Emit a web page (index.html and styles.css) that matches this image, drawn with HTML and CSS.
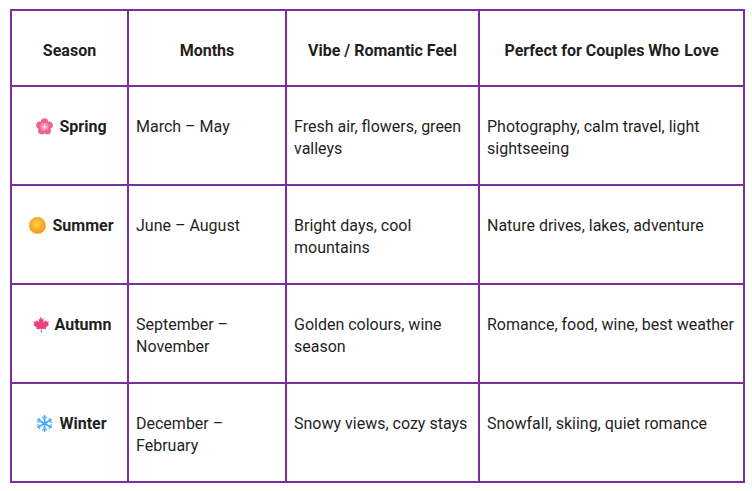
FILE: index.html
```html
<!DOCTYPE html>
<html lang="en">
<head>
<meta charset="utf-8">
<title>Seasons</title>
<link rel="stylesheet" href="styles.css">
</head>
<body>
<table class="seasons">
  <colgroup>
    <col class="c1"><col class="c2"><col class="c3"><col class="c4">
  </colgroup>
  <thead>
    <tr>
      <th>Season</th>
      <th>Months</th>
      <th>Vibe / Romantic Feel</th>
      <th>Perfect for Couples Who Love</th>
    </tr>
  </thead>
  <tbody>
    <tr>
      <td class="season"><span class="emo"><svg viewBox="0 0 16 16" width="17" height="17"><g fill="#f06292"><circle cx="8" cy="3.6" r="3.4"/><circle cx="12.4" cy="6.8" r="3.4"/><circle cx="10.7" cy="12" r="3.4"/><circle cx="5.3" cy="12" r="3.4"/><circle cx="3.6" cy="6.8" r="3.4"/></g><circle cx="8" cy="8.3" r="3.8" fill="#f48fb1"/><path d="M8 6.2v4.2M5.9 8.3h4.2" stroke="#fbe3ee" stroke-width="1.1"/></svg></span> Spring</td>
      <td>March – May</td>
      <td>Fresh air, flowers, green valleys</td>
      <td>Photography, calm travel, light sightseeing</td>
    </tr>
    <tr>
      <td class="season"><span class="emo"><svg viewBox="0 0 16 16" width="17" height="17"><defs><radialGradient id="sg" cx="0.45" cy="0.4" r="0.6"><stop offset="0" stop-color="#ffd54f"/><stop offset="1" stop-color="#f59a1b"/></radialGradient></defs><circle cx="8" cy="8" r="7.8" fill="#f7a128" stroke="#ef8f1a" stroke-width="0.6" stroke-dasharray="1.2 0.9"/><circle cx="8" cy="8" r="6.6" fill="url(#sg)"/></svg></span> Summer</td>
      <td>June – August</td>
      <td>Bright days, cool mountains</td>
      <td>Nature drives, lakes, adventure</td>
    </tr>
    <tr>
      <td class="season"><span class="emo"><svg viewBox="0 0 16 16" width="17" height="17"><path fill="#ec407a" d="M8 0.3l1.7 3 1.4-0.8-0.4 3.6 2.5-2.1 0.6 1.5 2.2-0.3-0.9 2.4 1.2 0.7-3.6 2.8 0.5 1.4-4.1-0.5v3.9h-0.8v-3.9l-4.1 0.5 0.5-1.4-3.6-2.8 1.2-0.7-0.9-2.4 2.2 0.3 0.6-1.5 2.5 2.1-0.4-3.6 1.4 0.8z"/></svg></span> Autumn</td>
      <td>September – November</td>
      <td>Golden colours, wine season</td>
      <td>Romance, food, wine, best weather</td>
    </tr>
    <tr>
      <td class="season"><span class="emo"><svg viewBox="0 0 16 16" width="17" height="17"><g stroke="#42a5f5" stroke-width="1.6" stroke-linecap="round" fill="none"><path d="M8 0.8v14.4M1.8 4.4l12.4 7.2M1.8 11.6l12.4-7.2"/><path d="M6 1.8l2 2 2-2M6 14.2l2-2 2 2M1.3 6.6l2.7-0.7-0.7-2.7M14.7 9.4l-2.7 0.7 0.7 2.7M1.3 9.4l2.7 0.7-0.7 2.7M14.7 6.6l-2.7-0.7 0.7-2.7" stroke="#64b5f6" stroke-width="1.2"/></g></svg></span> Winter</td>
      <td>December – February</td>
      <td>Snowy views, cozy stays</td>
      <td>Snowfall, skiing, quiet romance</td>
    </tr>
  </tbody>
</table>
</body>
</html>
```

FILE: styles.css
```css
html, body {
  margin: 0;
  padding: 0;
  background: #ffffff;
}
body {
  padding: 9px 0 0 10px;
  font-family: Roboto, "Liberation Sans", Arial, sans-serif;
  color: #1f1f1f;
}
.seasons {
  border-collapse: collapse;
  table-layout: fixed;
  width: 733px;
  font-size: 16px;
  line-height: 22px;
}
.c1 { width: 117px; }
.c2 { width: 158px; }
.c3 { width: 193px; }
.c4 { width: 265px; }
.seasons th,
.seasons td {
  border: 2px solid #7b2d9b;
  padding: 29px 6px 24px 7px;
  vertical-align: top;
  text-align: left;
}
.seasons th {
  font-weight: 700;
  text-align: center;
  padding: 29px 4px 23px;
}
.seasons td {
  height: 44px;
}
.seasons td.season {
  font-weight: 700;
  text-align: center;
  padding-left: 6px;
  padding-right: 2px;
}
.emo {
  display: inline-block;
  width: 19px;
  height: 17px;
  vertical-align: -3px;
}
.emo svg {
  display: block;
}
```
